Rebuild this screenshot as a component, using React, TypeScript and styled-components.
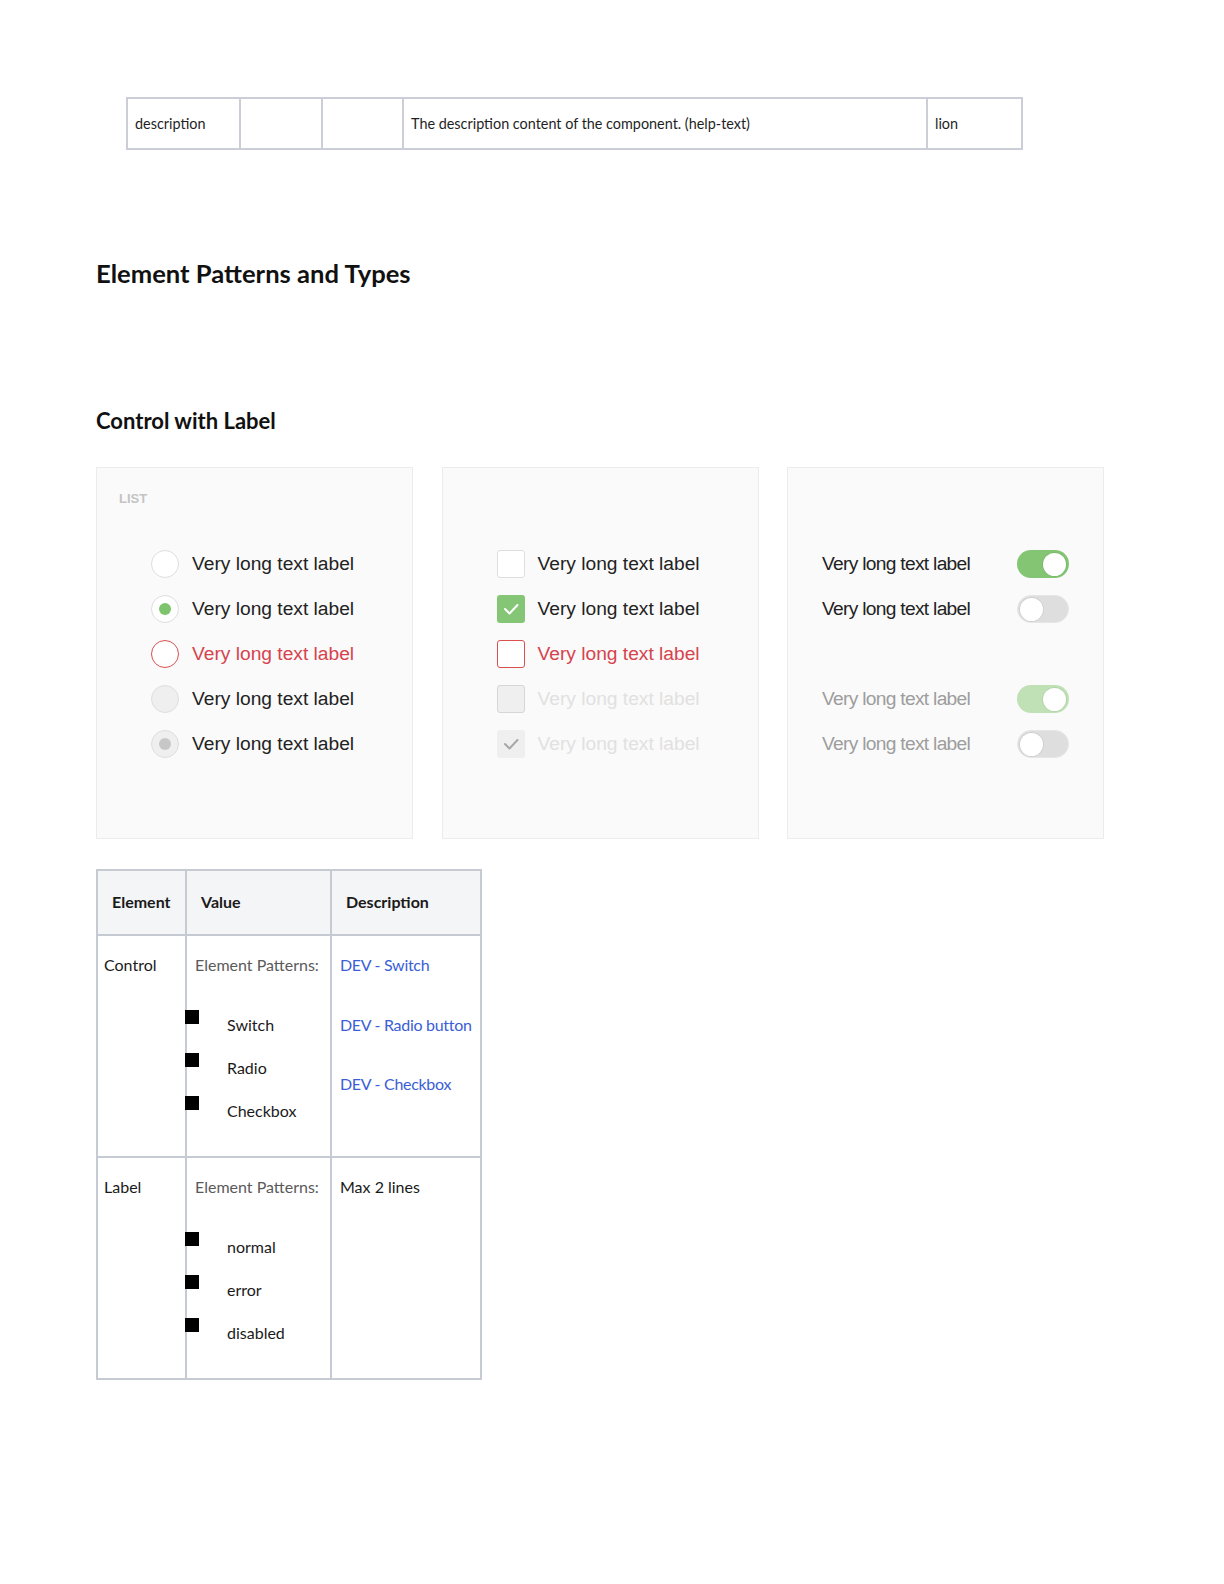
import styled, { createGlobalStyle, css } from 'styled-components'

const GlobalStyle = createGlobalStyle`
  html, body {
    margin: 0;
    padding: 0;
    background: #fff;
  }
  body {
    font-family: Lato, "Liberation Sans", sans-serif;
    color: #1d1d1d;
  }
  * {
    box-sizing: border-box;
  }
`

const Page = styled.div`
  width: 1224px;
  min-height: 1584px;
  padding: 97px 0 0 96px;
`

const Col = styled.col<{ $w: number }>`
  width: ${(p) => p.$w}px;
`

const PropsTable = styled.table`
  margin-left: 30px;
  width: 897px;
  table-layout: fixed;
  border-spacing: 0;
  border-top: 2px solid #cbced6;
  border-left: 2px solid #cbced6;

  td {
    height: 51px;
    padding: 0 7px;
    font-size: 14.4px;
    line-height: 20px;
    color: #1f1f1f;
    border-right: 2px solid #cbced6;
    border-bottom: 2px solid #cbced6;
    vertical-align: middle;
  }
`

const Title = styled.h2`
  margin: 108px 0 0;
  font: 700 25.6px/31px Lato, sans-serif;
  color: #111;
`

const Subtitle = styled.h3`
  margin: 119px 0 0;
  font: 700 22px/26.4px Lato, sans-serif;
  color: #111;
`

const Cards = styled.div`
  display: flex;
  gap: 28.5px;
  margin-top: 33px;
`

const Card = styled.section`
  width: 317px;
  height: 372px;
  background: #fafafa;
  border: 1px solid #ececec;
  padding: 23px 0 0 22px;
`

const Caption = styled.div`
  height: 16px;
  font: 700 13px/16px "Liberation Sans", Arial, sans-serif;
  color: #c4c4c4;
`

const List = styled.div<{ $pad: string }>`
  display: flex;
  flex-direction: column;
  gap: 16.8px;
  margin-top: 43px;
  padding: ${(p) => p.$pad};
`

const Row = styled.div<{ $spread?: boolean; $gapBefore?: boolean }>`
  display: flex;
  align-items: center;
  gap: 13px;
  height: 28px;
  ${(p) => p.$spread && css`justify-content: space-between;`}
  ${(p) => p.$gapBefore && css`margin-top: 44.8px;`}
`

type Tone = 'normal' | 'error' | 'faded' | 'muted'

const toneColor: Record<Tone, string> = {
  normal: '#222222',
  error: '#d6434d',
  faded: '#e1e1e1',
  muted: '#9d9d9d',
}

const Label = styled.span<{ $tone: Tone; $tight?: boolean }>`
  font: 400 19.2px/28px "Liberation Sans", Arial, sans-serif;
  color: ${(p) => toneColor[p.$tone]};
  white-space: nowrap;
  ${(p) => p.$tight && css`letter-spacing: -0.7px;`}
`

type CtrlState = 'off' | 'on' | 'error' | 'disabled' | 'disabledOn'

const RadioMark = styled.span<{ $state: CtrlState }>`
  flex: none;
  width: 28px;
  height: 28px;
  border-radius: 50%;
  display: flex;
  align-items: center;
  justify-content: center;
  background: ${(p) => (p.$state === 'disabled' || p.$state === 'disabledOn' ? '#efefef' : '#fff')};
  border: ${(p) => (p.$state === 'error' ? '1.5px solid #d9504f' : '1px solid #dedede')};

  &::after {
    content: '';
    width: 12px;
    height: 12px;
    border-radius: 50%;
    display: ${(p) => (p.$state === 'on' || p.$state === 'disabledOn' ? 'block' : 'none')};
    background: ${(p) => (p.$state === 'on' ? '#7dc46c' : '#c7c7c7')};
  }
`

const BoxMark = styled.span<{ $state: CtrlState }>`
  flex: none;
  width: 28px;
  height: 28px;
  border-radius: 3px;
  display: flex;
  align-items: center;
  justify-content: center;
  ${(p) => {
    switch (p.$state) {
      case 'on':
        return css`background: #84c675; border: none; color: #fff;`
      case 'error':
        return css`background: #fff; border: 1.5px solid #d9504f;`
      case 'disabled':
        return css`background: #efefef; border: 1px solid #d6d6d6;`
      case 'disabledOn':
        return css`background: #efefef; border: none; color: #a8a8a8;`
      default:
        return css`background: #fff; border: 1px solid #dedede;`
    }
  }}

  svg {
    width: 28px;
    height: 28px;
  }
`

const Toggle = styled.span<{ $on: boolean; $disabled?: boolean }>`
  flex: none;
  width: 52px;
  height: 28px;
  border-radius: 14px;
  padding: 2px;
  display: flex;
  justify-content: ${(p) => (p.$on ? 'flex-end' : 'flex-start')};
  background: ${(p) => (p.$on ? (p.$disabled ? '#bfe1b5' : '#84c574') : '#dedede')};
  border: 1px solid ${(p) => (p.$on ? 'transparent' : '#e6e6e6')};

  &::after {
    content: '';
    width: 23px;
    height: 23px;
    border-radius: 50%;
    background: #fff;
    box-shadow: 0 0 0 1px rgba(0, 0, 0, 0.06);
  }
`

const SpecTable = styled.table`
  margin-top: 30px;
  width: 386px;
  table-layout: fixed;
  border-spacing: 0;
  border-top: 2px solid #c6cad3;
  border-left: 2px solid #c6cad3;

  th,
  td {
    border-right: 2px solid #c6cad3;
    border-bottom: 2px solid #c6cad3;
    text-align: left;
  }

  th {
    height: 65px;
    padding: 0 14px 2px;
    background: #f4f5f7;
    font: 700 16px/24px Lato, sans-serif;
    color: #1a1a1a;
    vertical-align: middle;
  }

  td {
    padding: 17px 6px 33px 8px;
    font: 400 16px/24px Lato, sans-serif;
    color: #1a1a1a;
    vertical-align: top;
  }

  td:first-child {
    padding-left: 6px;
  }
`

const Lead = styled.div`
  color: #5a5a5a;
`

const Bullets = styled.ul`
  list-style: none;
  margin: 36px 0 0;
  padding: 0;
  display: flex;
  flex-direction: column;
  gap: 19px;
`

const Bullet = styled.li`
  display: flex;
  align-items: flex-start;

  &::before {
    content: '';
    flex: none;
    width: 14px;
    height: 14px;
    margin: -3px 28px 0 -10px;
    background: #000;
  }
`

const Links = styled.div`
  display: flex;
  flex-direction: column;
  gap: 35.5px;
`

const DocLink = styled.a`
  color: #3a5ed6;
  text-decoration: none;
  white-space: nowrap;
  letter-spacing: -0.3px;
`

const Check = () => (
  <svg viewBox="0 0 28 28" fill="none">
    <polyline points="8,14 12.5,18.5 20.5,10" stroke="currentColor" strokeWidth="2" strokeLinecap="round" strokeLinejoin="round" />
  </svg>
)

const rows: { state: CtrlState; tone: Tone }[] = [
  { state: 'off', tone: 'normal' },
  { state: 'on', tone: 'normal' },
  { state: 'error', tone: 'error' },
  { state: 'disabled', tone: 'normal' },
  { state: 'disabledOn', tone: 'normal' },
]

const boxTone = (s: CtrlState): Tone =>
  s === 'error' ? 'error' : s === 'disabled' || s === 'disabledOn' ? 'faded' : 'normal'

const switches = [
  { on: true, disabled: false },
  { on: false, disabled: false },
  { on: true, disabled: true },
  { on: false, disabled: true },
]

const TEXT = 'Very long text label'

export default function App() {
  return (
    <>
      <GlobalStyle />
      <Page>
        <PropsTable>
          <colgroup>
            <Col $w={113} />
            <Col $w={82} />
            <Col $w={81} />
            <Col $w={524} />
            <Col $w={95} />
          </colgroup>
          <tbody>
            <tr>
              <td>description</td>
              <td></td>
              <td></td>
              <td>The description content of the component. (help-text)</td>
              <td>lion</td>
            </tr>
          </tbody>
        </PropsTable>

        <Title>Element Patterns and Types</Title>
        <Subtitle>Control with Label</Subtitle>

        <Cards>
          <Card>
            <Caption>LIST</Caption>
            <List $pad="0 0 0 32px">
              {rows.map((r, i) => (
                <Row key={i}>
                  <RadioMark $state={r.state} />
                  <Label $tone={r.tone}>{TEXT}</Label>
                </Row>
              ))}
            </List>
          </Card>

          <Card>
            <Caption />
            <List $pad="0 0 0 32px">
              {rows.map((r, i) => (
                <Row key={i}>
                  <BoxMark $state={r.state}>
                    {(r.state === 'on' || r.state === 'disabledOn') && <Check />}
                  </BoxMark>
                  <Label $tone={boxTone(r.state)}>{TEXT}</Label>
                </Row>
              ))}
            </List>
          </Card>

          <Card>
            <Caption />
            <List $pad="0 34px 0 12px">
              {switches.map((s, i) => (
                <Row key={i} $spread $gapBefore={i === 2}>
                  <Label $tone={s.disabled ? 'muted' : 'normal'} $tight>
                    {TEXT}
                  </Label>
                  <Toggle $on={s.on} $disabled={s.disabled} />
                </Row>
              ))}
            </List>
          </Card>
        </Cards>

        <SpecTable>
          <colgroup>
            <Col $w={89} />
            <Col $w={145} />
            <Col $w={150} />
          </colgroup>
          <thead>
            <tr>
              <th>Element</th>
              <th>Value</th>
              <th>Description</th>
            </tr>
          </thead>
          <tbody>
            <tr>
              <td>Control</td>
              <td>
                <Lead>Element Patterns:</Lead>
                <Bullets>
                  <Bullet>Switch</Bullet>
                  <Bullet>Radio</Bullet>
                  <Bullet>Checkbox</Bullet>
                </Bullets>
              </td>
              <td>
                <Links>
                  <DocLink href="#">DEV - Switch</DocLink>
                  <DocLink href="#">DEV - Radio button</DocLink>
                  <DocLink href="#">DEV - Checkbox</DocLink>
                </Links>
              </td>
            </tr>
            <tr>
              <td>Label</td>
              <td>
                <Lead>Element Patterns:</Lead>
                <Bullets>
                  <Bullet>normal</Bullet>
                  <Bullet>error</Bullet>
                  <Bullet>disabled</Bullet>
                </Bullets>
              </td>
              <td>Max 2 lines</td>
            </tr>
          </tbody>
        </SpecTable>
      </Page>
    </>
  )
}
